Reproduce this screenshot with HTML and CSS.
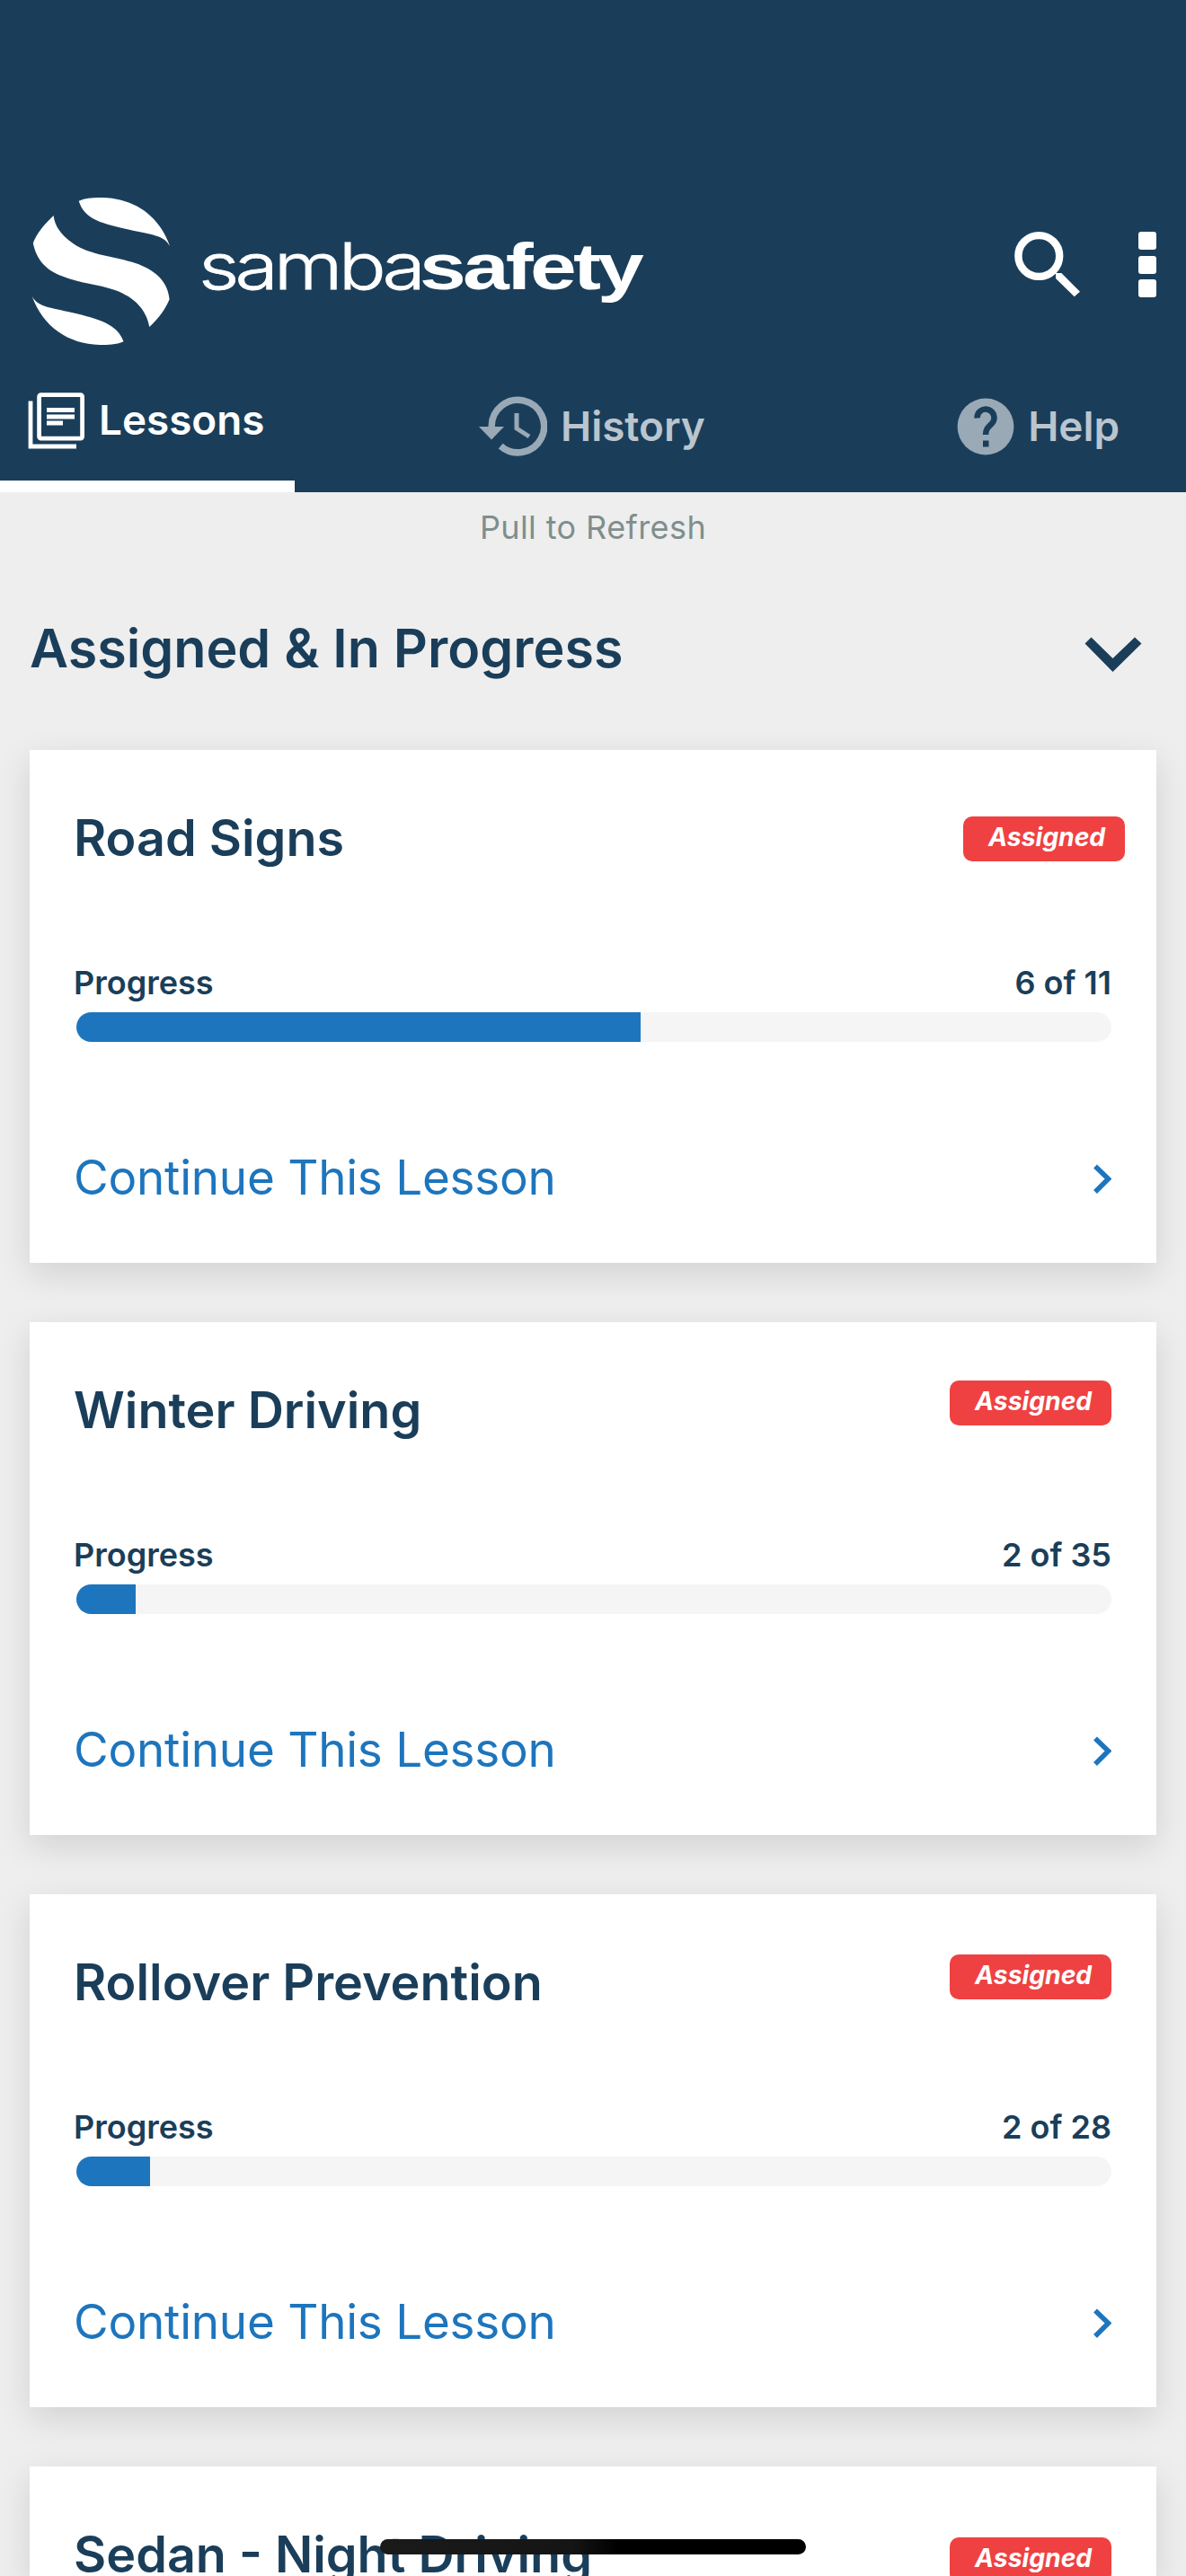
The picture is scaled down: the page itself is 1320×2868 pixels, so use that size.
FILE: index.html
```html
<!DOCTYPE html>
<html lang="en">
<head>
  <meta charset="UTF-8" />
  <meta name="viewport" content="width=device-width, initial-scale=1.0" />
  <title>SambaSafety - Lessons</title>
  <link rel="stylesheet" href="styles.css">
</head>
<body>

  <header class="header">
    <div class="top-bar">
      <svg class="logo" width="690" height="170" viewBox="30 217 690 170" fill="#fff">
        <path d="M87.700 223.700C96 220 105 219.800 114 220C150 221 177 240 189 274C183 262 168 261 145 256C115 249 94 245 87.700 223.700Z" />
        <path d="M59.600 240C46 253 40 262 36.800 270.700C41 290 51 300 68 307C90 316 108 316 128 323C150 331 163 345 166.300 364C178 353 184 344 188.600 333.300C187 315 175 301 150 292.700C130 286 100 284 82 271.500C68 262 61 252 59.600 240Z" />
        <path d="M137.500 380.300C129 384 120 384 111 384C76 383 48 364 35.500 329.500C42 342 57 342.500 80 348C110 355 131 361 137.500 380.300Z" />
        <text class="word-light" x="221" y="322" textLength="248" lengthAdjust="spacingAndGlyphs">samba</text>
        <text class="word-bold" x="467" y="322" textLength="246" lengthAdjust="spacingAndGlyphs">safety</text>
      </svg>
      <div class="actions">
        <svg width="76" height="76" viewBox="1128 256 76 76">
          <circle cx="1156.300" cy="285" r="22.900" fill="none" stroke="#fff" stroke-width="8.400" />
          <path d="M1175 304h6.300L1202 324.700l-6.300 5.600L1175 310z" fill="#fff" />
        </svg>
        <div class="menu"><i></i><i></i><i></i></div>
      </div>
    </div>

    <nav class="tabs">
      <a class="tab active">
        <svg width="63" height="63" viewBox="31 436.500 63 63" fill="none" stroke="#fff" stroke-width="4.800">
          <rect x="43.600" y="439.100" width="48" height="48.500" rx="2" />
          <path d="M34 446v50.500h51M52 456h31M52 463.500h31M52 470.500h18" />
        </svg>
        <span>Lessons</span>
      </a>
      <a class="tab history">
        <svg width="76" height="68" viewBox="533 441 76 68" fill="none" stroke="#9aa9b6">
          <path d="M547.200 476v-1a29.200 29.200 0 1 1 10 21.600" stroke-width="7.500" />
          <path d="M533 475h28l-14 14.500z" fill="#9aa9b6" stroke="none" />
          <path d="M575 460v17l14 9" stroke-width="5" />
        </svg>
        <span>History</span>
      </a>
      <a class="tab help">
        <svg width="64" height="64" viewBox="1064 442.500 64 64">
          <circle cx="1096" cy="474.500" r="31.400" fill="#9aa9b6" />
          <path d="M1086.500 465a9.500 9.500 0 1 1 16.500 6c-4 4-7 6-7 12.500" fill="none" stroke="#1a3e5a" stroke-width="6.500" />
          <path d="M1093 490h6.500v7h-6.500z" fill="#1a3e5a" />
        </svg>
        <span>Help</span>
      </a>
    </nav>
  </header>

  <main>
    <p class="pull">Pull to Refresh</p>

    <div class="section-title">
      <h1>Assigned &amp; In Progress</h1>
      <svg width="64" height="40" viewBox="0 0 64 40"><path d="M0.500 7.500 7.500 0.500 31.500 24 56 0.500 63.500 7.500 31.500 39z" fill="#1a3e5a" /></svg>
    </div>

    <section class="card">
      <div class="card-head">
        <h2>Road Signs</h2>
        <span class="badge badge-first">Assigned</span>
      </div>
      <div class="progress-label"><span>Progress</span><span>6 of 11</span></div>
      <div class="track"><div class="fill" style="width: 54.55%"></div></div>
      <a class="continue"><span>Continue This Lesson</span>
        <svg width="20" height="34" viewBox="0 0 20 34"><path d="M2 2.500 16.500 16.500 2 31" /></svg>
      </a>
    </section>

    <section class="card">
      <div class="card-head">
        <h2>Winter Driving</h2>
        <span class="badge">Assigned</span>
      </div>
      <div class="progress-label"><span>Progress</span><span>2 of 35</span></div>
      <div class="track"><div class="fill" style="width: 5.71%"></div></div>
      <a class="continue"><span>Continue This Lesson</span>
        <svg width="20" height="34" viewBox="0 0 20 34"><path d="M2 2.500 16.500 16.500 2 31" /></svg>
      </a>
    </section>

    <section class="card">
      <div class="card-head">
        <h2>Rollover Prevention</h2>
        <span class="badge badge-third">Assigned</span>
      </div>
      <div class="progress-label"><span>Progress</span><span>2 of 28</span></div>
      <div class="track"><div class="fill" style="width: 7.14%"></div></div>
      <a class="continue"><span>Continue This Lesson</span>
        <svg width="20" height="34" viewBox="0 0 20 34"><path d="M2 2.500 16.500 16.500 2 31" /></svg>
      </a>
    </section>

    <section class="card card-last">
      <div class="card-head">
        <h2>Sedan - Night Driving</h2>
        <span class="badge badge-last">Assigned</span>
      </div>
    </section>
  </main>

  <div class="home-bar"></div>

</body>
</html>
```
FILE: styles.css
```css
* {
  box-sizing: border-box;
  margin: 0;
  padding: 0;
}

html {
  overflow: hidden;
}

body {
  font-family: Inter, 'Liberation Sans', sans-serif;
  background: #eee;
  color: #1a3e5a;
  height: 2868px;
  overflow: hidden;
  position: relative;
}

svg {
  display: block;
  flex: none;
}

span, h1, h2, .pull {
  white-space: nowrap;
}

/* Header */
.header {
  background: #1a3e5a;
  height: 548px;
  padding-top: 217px;
}

.top-bar {
  display: flex;
  justify-content: space-between;
  height: 170px;
  padding: 0 33px 0 30px;
}

.word-light {
  font-family: Inter, sans-serif;
  font-size: 71px;
  font-weight: 300;
  letter-spacing: -4px;
  stroke: #fff;
  stroke-width: 0.800px;
}

.word-bold {
  font-family: 'Liberation Sans', Arial, sans-serif;
  font-size: 73px;
  font-weight: bold;
  letter-spacing: -3px;
}

.actions {
  display: flex;
  gap: 63px;
  padding-top: 39px;
}

.menu {
  display: flex;
  flex-direction: column;
  gap: 6.500px;
  padding-top: 2px;
}

.menu i {
  width: 20px;
  height: 20px;
  border-radius: 3px;
  background: #fff;
}

.tabs {
  display: flex;
  height: 161px;
}

.tab {
  display: flex;
  align-items: flex-start;
  font-size: 45.800px;
  font-weight: 600;
  line-height: 60px;
  color: #bac5ce;
}

.tab.active {
  width: 328px;
  color: #fff;
  padding: 49.500px 0 0 31px;
  border-bottom: 13px solid #fff;
}

.tab.active span {
  margin: 1px 0 0 16px;
}

.history {
  margin-left: 205px;
  padding-top: 54px;
}

.history span {
  margin: 3.500px 0 0 15px;
}

.help {
  margin-left: auto;
  padding: 55.500px 74px 0 0;
}

.help span {
  margin: 2px 0 0 15px;
}

/* Content */
.pull {
  height: 78px;
  padding-top: 17px;
  font-size: 36px;
  line-height: 44px;
  letter-spacing: 0.400px;
  text-align: center;
  color: #7f8e8c;
}

.section-title {
  display: flex;
  justify-content: space-between;
  height: 209px;
  padding: 83px 49px 0 33px;
}

.section-title h1 {
  font-size: 59.200px;
  line-height: 70px;
  margin-top: -22px;
}

h1, h2 {
  font-weight: 600;
}

.card {
  height: 571px;
  margin: 0 33px 66px;
  padding: 0 50px 0 49px;
  background: #fff;
  box-shadow: 0 12px 36px rgba(0, 0, 0, 0.12);
}

.card-head {
  display: flex;
  justify-content: space-between;
  align-items: flex-start;
  height: 236px;
}

.card-head h2 {
  font-size: 55.700px;
  line-height: 66px;
  margin-top: 65px;
}

/* Only the top of this card is on screen */
.card-last {
  height: 122px;
  margin-bottom: 0;
}

.badge {
  width: 180px;
  height: 50px;
  margin-top: 65px;
  padding-left: 28px;
  border-radius: 10px;
  background: #ef4142;
  color: #fff;
  font-size: 28.300px;
  font-weight: 700;
  font-style: italic;
  line-height: 47px;
}

.badge-first {
  margin: 74px -15px 0 0;
}

.badge-third {
  margin-top: 67px;
}

.badge-last {
  margin-top: 79px;
}

.progress-label {
  display: flex;
  justify-content: space-between;
  height: 56px;
  font-size: 36px;
  font-weight: 600;
  line-height: 47px;
}

.track {
  height: 33px;
  margin-left: 3px;
  border-radius: 17px;
  background: #f5f5f5;
  overflow: hidden;
}

.fill {
  height: 100%;
  background: #1d75bd;
}

.continue {
  display: flex;
  justify-content: space-between;
  padding-top: 118px;
  font-size: 53px;
  line-height: 66px;
  letter-spacing: -0.250px;
  color: #1d75bd;
}

.continue svg {
  margin-top: 18px;
}

.continue path {
  fill: none;
  stroke: #1d75bd;
  stroke-width: 5.500;
}

/* iOS home indicator */
.home-bar {
  position: absolute;
  left: 423px;
  top: 2827px;
  width: 474px;
  height: 17px;
  border-radius: 9px;
  background: linear-gradient(to right, #1a1a1a 0%, #151515 45%, #000 56%);
}
```
